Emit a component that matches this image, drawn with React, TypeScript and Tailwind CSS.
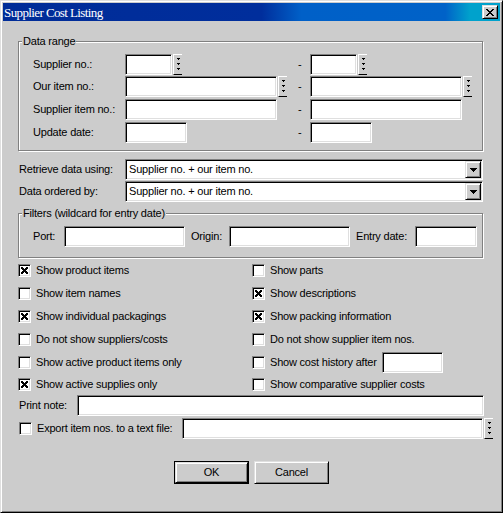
import React from "react";

const sunken =
  "bg-white border border-t-[#808080] border-l-[#808080] border-b-white border-r-white shadow-[inset_1px_1px_0_#000,inset_-1px_-1px_0_#dfdfdf]";
const raised =
  "bg-[#cccccc] border border-t-[#dfdfdf] border-l-[#dfdfdf] border-b-black border-r-black shadow-[inset_1px_1px_0_#fff,inset_-1px_-1px_0_#808080]";

function Field({ className = "" }: { className?: string }) {
  return <div className={`h-[21px] shrink-0 ${sunken} ${className}`} />;
}

// the little "..." lookup button next to some fields
function Lookup() {
  return (
    <div className="ml-[1px] flex h-[21px] w-[9px] shrink-0 items-center justify-center border-t border-l border-b border-t-white border-l-white border-b-black bg-[#cccccc]">
      <svg width="5" height="13" viewBox="0 0 5 13" shapeRendering="crispEdges">
        <rect x="1" y="0" width="3" height="1" fill="#000" />
        <rect x="2" y="1" width="1" height="1" fill="#000" />
        <rect x="1" y="5" width="3" height="1" fill="#000" />
        <rect x="2" y="6" width="1" height="1" fill="#000" />
        <rect x="1" y="10" width="3" height="1" fill="#000" />
        <rect x="2" y="11" width="1" height="1" fill="#000" />
      </svg>
    </div>
  );
}

function Check({ checked = false }: { checked?: boolean }) {
  return (
    <div className={`flex h-[13px] w-[13px] shrink-0 items-center justify-center ${sunken}`}>
      {checked && (
        <svg width="7" height="7" viewBox="0 0 7 7" shapeRendering="crispEdges">
          <path d="M0 0 L7 7 M7 0 L0 7" stroke="#000" strokeWidth="2" />
        </svg>
      )}
    </div>
  );
}

function Combo({ value }: { value: string }) {
  return (
    <div className={`flex h-[21px] w-[358px] items-center ${sunken}`}>
      <span className="flex-1 pl-[3px]">{value}</span>
      <div className={`m-[1px] flex h-[17px] w-[16px] items-center justify-center ${raised}`}>
        <svg width="7" height="4" viewBox="0 0 7 4" shapeRendering="crispEdges">
          <rect x="0" y="0" width="7" height="1" fill="#000" />
          <rect x="1" y="1" width="5" height="1" fill="#000" />
          <rect x="2" y="2" width="3" height="1" fill="#000" />
          <rect x="3" y="3" width="1" height="1" fill="#000" />
        </svg>
      </div>
    </div>
  );
}

function Group({ title, className = "", children }: { title: string; className?: string; children: React.ReactNode }) {
  return (
    <div className={`relative w-[465px] border border-[#808080] shadow-[inset_1px_1px_0_#fff,1px_1px_0_#fff] ${className}`}>
      <span className="absolute -top-[7px] left-[3px] bg-[#cccccc] px-[1px] leading-[13px]">{title}</span>
      {children}
    </div>
  );
}

function CheckRow({ label, checked, last, extra }: { label: string; checked?: boolean; last?: boolean; extra?: React.ReactNode }) {
  return (
    <div className={`flex items-center ${last ? "h-[21px]" : "h-[23px]"}`}>
      <Check checked={checked} />
      <span className="ml-[5px]">{label}</span>
      {extra}
    </div>
  );
}

export default function App() {
  const rangeRows = [
    { label: "Supplier no.:", w: "w-[47px]", lookup: true, mt: "" },
    { label: "Our item no.:", w: "w-[152px]", lookup: true, mt: "mt-[1px]" },
    { label: "Supplier item no.:", w: "w-[152px]", lookup: false, mt: "mt-[2px]" },
    { label: "Update date:", w: "w-[62px]", lookup: false, mt: "mt-[2px]" },
  ];

  return (
    <div className="h-[513px] w-[503px] bg-[#cccccc] font-['Liberation_Sans',Arial,sans-serif] text-[11px] leading-[13px] tracking-[-0.2px] text-black">
      <div className="flex h-full w-full flex-col border border-t-[#dfdfdf] border-l-[#dfdfdf] border-b-black border-r-black p-[2px] shadow-[inset_1px_1px_0_#fff,inset_-1px_-1px_0_#808080]">
        {/* title bar */}
        <div className="flex h-[18px] shrink-0 items-center justify-between bg-[linear-gradient(to_right,#002c98_0%,#002e9c_52%,#0060c8_60%,#0062c8_89%,#00a2cc_94%,#00a2cc_100%)]">
          <span className="pl-[1px] font-['Liberation_Serif',serif] text-[13px] tracking-[-0.6px] text-white">
            Supplier Cost Listing
          </span>
          <div className={`mr-[2px] flex h-[14px] w-[16px] items-center justify-center ${raised}`}>
            <svg width="8" height="7" viewBox="0 0 8 7" shapeRendering="crispEdges">
              <path d="M0.5 0 L7.5 7 M7.5 0 L0.5 7" stroke="#000" strokeWidth="1.6" />
            </svg>
          </div>
        </div>

        <div className="flex flex-col px-[15px]">
          {/* data range */}
          <Group title="Data range" className="mt-[20px] pb-[7px] pl-[14px] pt-[12px]">
            {rangeRows.map((r) => (
              <div key={r.label} className={`flex h-[21px] items-center ${r.mt}`}>
                <span className="w-[92px] shrink-0">{r.label}</span>
                <div className="flex w-[173px] shrink-0">
                  <Field className={r.w} />
                  {r.lookup && <Lookup />}
                </div>
                <span className="w-[12px] shrink-0">-</span>
                <div className="flex">
                  <Field className={r.w} />
                  {r.lookup && <Lookup />}
                </div>
              </div>
            ))}
          </Group>

          <div className="mt-[8px] flex items-center">
            <span className="ml-[1px] w-[106px] shrink-0">Retrieve data using:</span>
            <Combo value="Supplier no. + our item no." />
          </div>
          <div className="mt-[1px] flex items-center">
            <span className="ml-[1px] w-[106px] shrink-0">Data ordered by:</span>
            <Combo value="Supplier no. + our item no." />
          </div>

          {/* filters */}
          <Group title="Filters (wildcard for entry date)" className="mt-[11px] pb-[10px] pl-[14px] pt-[12px]">
            <div className="flex h-[21px] items-center">
              <span className="w-[31px] shrink-0">Port:</span>
              <Field className="w-[121px]" />
              <span className="w-[44px] shrink-0 pl-[6px]">Origin:</span>
              <Field className="w-[121px]" />
              <span className="w-[65px] shrink-0 pl-[6px]">Entry date:</span>
              <Field className="w-[62px]" />
            </div>
          </Group>

          {/* options */}
          <div className="mt-[1px] flex">
            <div className="flex w-[234px] flex-col">
              <CheckRow label="Show product items" checked />
              <CheckRow label="Show item names" />
              <CheckRow label="Show individual packagings" checked />
              <CheckRow label="Do not show suppliers/costs" />
              <CheckRow label="Show active product items only" />
              <CheckRow label="Show active supplies only" checked last />
            </div>
            <div className="flex flex-col">
              <CheckRow label="Show parts" />
              <CheckRow label="Show descriptions" checked />
              <CheckRow label="Show packing information" checked />
              <CheckRow label="Do not show supplier item nos." />
              <CheckRow label="Show cost history after" extra={<Field className="ml-[5px] w-[61px]" />} />
              <CheckRow label="Show comparative supplier costs" last />
            </div>
          </div>

          <div className="flex items-center">
            <span className="ml-[1px] w-[58px] shrink-0">Print note:</span>
            <Field className="w-[407px]" />
          </div>

          <div className="mt-[2px] flex items-center">
            <div className="ml-[1px]">
              <Check />
            </div>
            <span className="ml-[5px] w-[145px] shrink-0">Export item nos. to a text file:</span>
            <Field className="w-[301px]" />
            <Lookup />
          </div>

          <div className="mt-[22px] flex justify-center gap-[5px]">
            <div className="border border-black">
              <button className={`flex h-[21px] w-[73px] items-center justify-center ${raised}`}>OK</button>
            </div>
            <button className={`flex h-[23px] w-[75px] items-center justify-center ${raised}`}>Cancel</button>
          </div>
        </div>
      </div>
    </div>
  );
}
